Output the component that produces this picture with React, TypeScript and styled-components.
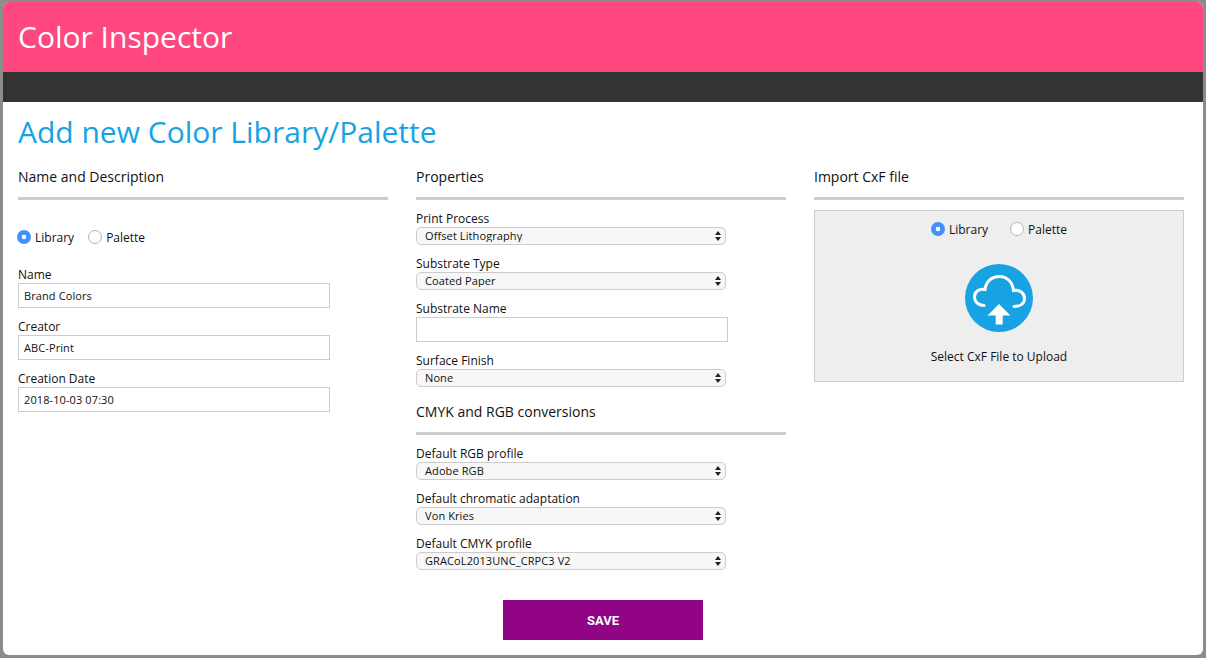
import React from 'react';
import styled, { createGlobalStyle } from 'styled-components';

const GlobalStyle = createGlobalStyle`
  html, body {
    margin: 0;
    background: #8c8c8c;
  }
  body {
    font-family: "Open Sans", "Noto Sans", sans-serif;
    color: #111;
  }
`;

const Window = styled.div`
  margin: 2px 3px 0;
  height: 653px;
  background: #fff;
  border-radius: 6px;
  overflow: hidden;
`;

const Header = styled.header`
  height: 70px;
  background: #ff487f;
  display: flex;
  align-items: center;
  padding-left: 15px;
`;

const AppTitle = styled.div`
  font-size: 30px;
  line-height: 40px;
  color: #fff;
`;

const NavBar = styled.div`
  height: 30px;
  background: #333;
`;

const Content = styled.main`
  padding: 10px 19px 0 15px;
`;

const PageTitle = styled.h1`
  margin: 0 0 15px;
  font-size: 30px;
  line-height: 40px;
  font-weight: 400;
  color: #17a2e3;
`;

const Columns = styled.div`
  display: grid;
  grid-template-columns: repeat(3, 370px);
  column-gap: 28px;
`;

const SectionTitle = styled.h2<{ $spaced?: boolean }>`
  margin: ${(p) => (p.$spaced ? '15px' : '0')} 0 9px;
  padding-bottom: 10px;
  border-bottom: 3px solid #ccc;
  font-size: 14px;
  line-height: 20px;
  font-weight: 400;
`;

const RadioRow = styled.div<{ $gap: number }>`
  display: flex;
  align-items: center;
  gap: ${(p) => p.$gap}px;
  font-size: 12px;
  line-height: 18px;
`;

const LeftRadios = styled.div`
  margin: 27px 0 18px -1px;
`;

const RadioLabel = styled.label`
  display: flex;
  align-items: center;
  gap: 4px;
`;

const RadioText = styled.span`
  padding-top: 2px;
`;

const Radio = styled.input.attrs({ type: 'radio' })`
  appearance: none;
  width: 14px;
  height: 14px;
  margin: 0;
  border-radius: 50%;
  border: 1px solid #b5b5b5;
  background: #fff;
  &:checked {
    border: 0;
    background: radial-gradient(circle, #fff 0 2px, #3f93fb 2.6px);
  }
`;

const Field = styled.div`
  margin-bottom: 9px;
  width: 312px;
`;

const FieldLabel = styled.label`
  display: block;
  height: 18px;
  font-size: 12px;
  line-height: 20px;
`;

const TextInput = styled.input`
  display: block;
  box-sizing: border-box;
  width: 312px;
  height: 25px;
  padding: 0 5px;
  border: 1px solid #ccc;
  background: #fff;
  font-family: "Open Sans", sans-serif;
  font-size: 11px;
  letter-spacing: 0.1px;
  color: #111;
  outline: none;
`;

const SelectWrap = styled.div`
  position: relative;
  width: 310px;
  height: 18px;
`;

const Select = styled.select`
  display: block;
  box-sizing: border-box;
  width: 100%;
  height: 18px;
  padding: 0 20px 2px 8px;
  appearance: none;
  border: 1px solid #ccc;
  border-radius: 5px;
  background: #f7f7f7;
  font-family: "Open Sans", sans-serif;
  font-size: 11px;
  letter-spacing: 0.1px;
  color: #111;
  outline: none;
`;

const SelectArrows = styled.svg`
  position: absolute;
  right: 5px;
  top: 4px;
  width: 6px;
  height: 10px;
  pointer-events: none;
`;

const UploadPanel = styled.div`
  box-sizing: border-box;
  height: 172px;
  margin-top: 10px;
  border: 1px solid #ccc;
  background: #eee;
  display: flex;
  flex-direction: column;
  align-items: center;
  padding-top: 8px;
`;

const UploadIcon = styled.svg`
  display: block;
  width: 68px;
  height: 68px;
  margin-top: 25px;
`;

const UploadText = styled.div`
  margin-top: 16px;
  font-size: 12px;
  line-height: 18px;
`;

const Actions = styled.div`
  display: flex;
  justify-content: center;
  margin: 21px 0 0 4px;
`;

const SaveButton = styled.button`
  width: 200px;
  height: 40px;
  border: 0;
  background: #900485;
  color: #fff;
  font-family: Roboto, sans-serif;
  font-size: 13px;
  font-weight: 700;
`;

const SelectField = ({ label, value }: { label: string; value: string }) => (
  <Field>
    <FieldLabel>{label}</FieldLabel>
    <SelectWrap>
      <Select defaultValue={value}>
        <option>{value}</option>
      </Select>
      <SelectArrows viewBox="0 0 6 10">
        <path d="M3 0 L6 4 H0 Z M3 10 L0 6 H6 Z" fill="#222" />
      </SelectArrows>
    </SelectWrap>
  </Field>
);

const InputField = ({ label, value }: { label: string; value?: string }) => (
  <Field>
    <FieldLabel>{label}</FieldLabel>
    <TextInput type="text" defaultValue={value} />
  </Field>
);

const LibraryRadios = ({ name, gap }: { name: string; gap: number }) => (
  <RadioRow $gap={gap}>
    <RadioLabel>
      <Radio name={name} defaultChecked />
      <RadioText>Library</RadioText>
    </RadioLabel>
    <RadioLabel>
      <Radio name={name} />
      <RadioText>Palette</RadioText>
    </RadioLabel>
  </RadioRow>
);

const App: React.FC = () => {
  return (
    <Window>
      <GlobalStyle />
      <Header>
        <AppTitle>Color Inspector</AppTitle>
      </Header>
      <NavBar />
      <Content>
        <PageTitle>Add new Color Library/Palette</PageTitle>
        <Columns>
          <section>
            <SectionTitle>Name and Description</SectionTitle>
            <LeftRadios>
              <LibraryRadios name="kind" gap={14} />
            </LeftRadios>
            <InputField label="Name" value="Brand Colors" />
            <InputField label="Creator" value="ABC-Print" />
            <InputField label="Creation Date" value="2018-10-03 07:30" />
          </section>
          <section>
            <SectionTitle>Properties</SectionTitle>
            <SelectField label="Print Process" value="Offset Lithography" />
            <SelectField label="Substrate Type" value="Coated Paper" />
            <InputField label="Substrate Name" />
            <SelectField label="Surface Finish" value="None" />
            <SectionTitle $spaced>CMYK and RGB conversions</SectionTitle>
            <SelectField label="Default RGB profile" value="Adobe RGB" />
            <SelectField label="Default chromatic adaptation" value="Von Kries" />
            <SelectField label="Default CMYK profile" value="GRACoL2013UNC_CRPC3 V2" />
          </section>
          <section>
            <SectionTitle>Import CxF file</SectionTitle>
            <UploadPanel>
              <LibraryRadios name="importKind" gap={22} />
              <UploadIcon viewBox="0 0 68 68">
                <circle cx="34" cy="34" r="34" fill="#17a2e3" />
                <path
                  d="M19 41.5 C13 41.5 9.5 37.5 9.5 33 C9.5 28 13.5 24.5 20 25.5 C21 17 27 12.5 34.5 12.5 C42 12.5 47.5 18 48.5 26.5 C54.5 25.5 59.5 29 59.5 34.5 C59.5 39 56 42.5 49 42.5"
                  fill="none"
                  stroke="#fff"
                  strokeWidth="3"
                  strokeLinecap="round"
                />
                <path d="M34 40 L45.5 51.5 H37.7 V60.5 H30.7 V51.5 H22.5 Z" fill="#fff" />
              </UploadIcon>
              <UploadText>Select CxF File to Upload</UploadText>
            </UploadPanel>
          </section>
        </Columns>
        <Actions>
          <SaveButton>SAVE</SaveButton>
        </Actions>
      </Content>
    </Window>
  );
};

export default App;
